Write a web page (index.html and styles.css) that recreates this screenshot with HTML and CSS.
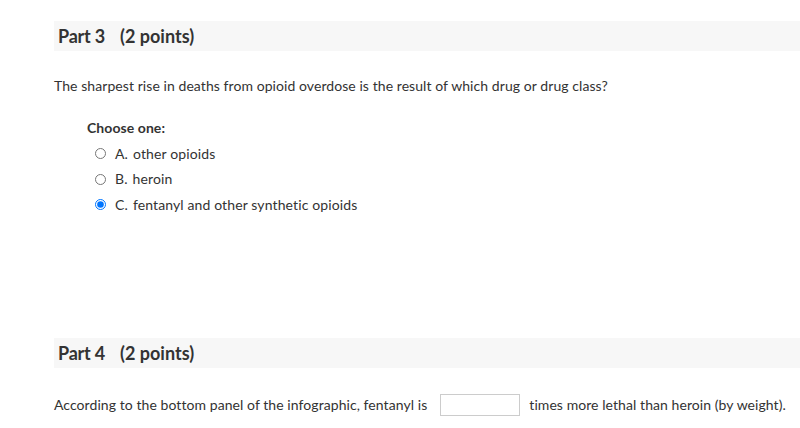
FILE: index.html
```html
<!DOCTYPE html>
<html>
<head>
<meta charset="utf-8">
<link rel="stylesheet" href="styles.css">
</head>
<body>
<div class="part">
  <div class="part-head"><span class="pn">Part 3</span><span class="pts">(2 points)</span></div>
  <p class="question">The sharpest rise in deaths from opioid overdose is the result of which drug or drug class?</p>
  <div class="choices">
    <div class="choose">Choose one:</div>
    <label class="opt"><input type="radio" name="q3"><span class="letter">A.</span>other opioids</label>
    <label class="opt"><input type="radio" name="q3"><span class="letter">B.</span>heroin</label>
    <label class="opt"><input type="radio" name="q3" checked><span class="letter">C.</span>fentanyl and other synthetic opioids</label>
  </div>
</div>
<div class="part part4">
  <div class="part-head"><span class="pn">Part 4</span><span class="pts">(2 points)</span></div>
  <p class="fill">According to the bottom panel of the infographic, fentanyl is <input type="text" class="blank"> times more lethal than heroin (by weight).</p>
</div>
</body>
</html>
```
FILE: styles.css
```css
html, body {
  margin: 0;
  padding: 0;
  background: #fff;
}
body {
  font-family: Lato, "Liberation Sans", sans-serif;
  color: #333;
  font-size: 14px;
  line-height: 18px;
  letter-spacing: 0.07px;
}
.part {
  margin-left: 54px;
  padding-top: 21px;
}
.part4 {
  padding-top: 120px;
}
.part-head {
  background: #f7f7f7;
  height: 30px;
  display: flex;
  align-items: center;
  padding-left: 4px;
  font-weight: bold;
  font-size: 18px;
  color: #333;
  letter-spacing: -0.2px;
}
.pts {
  margin-left: 15px;
  letter-spacing: 0;
}
.question {
  margin: 26px 0 0 0;
  line-height: 18px;
}
.choices {
  margin: 24px 0 0 33px;
}
.choose {
  font-weight: bold;
  line-height: 18px;
  color: #333;
}
.opt {
  display: flex;
  align-items: center;
  height: 25.5px;
  margin-left: 0;
  letter-spacing: 0.12px;
}
.opt:first-of-type {
  margin-top: 4px;
}
.opt input {
  width: 11px;
  height: 11px;
  margin: 0 9px 0 8px;
}
.letter {
  margin-right: 5px;
}
.fill {
  margin: 26px 0 0 0;
  display: flex;
  align-items: center;
  white-space: nowrap;
}
.blank {
  width: 80px;
  height: 22px;
  box-sizing: border-box;
  border: 1px solid #ccc;
  margin: 0 9px 0 13px;
  padding: 0;
}
```
